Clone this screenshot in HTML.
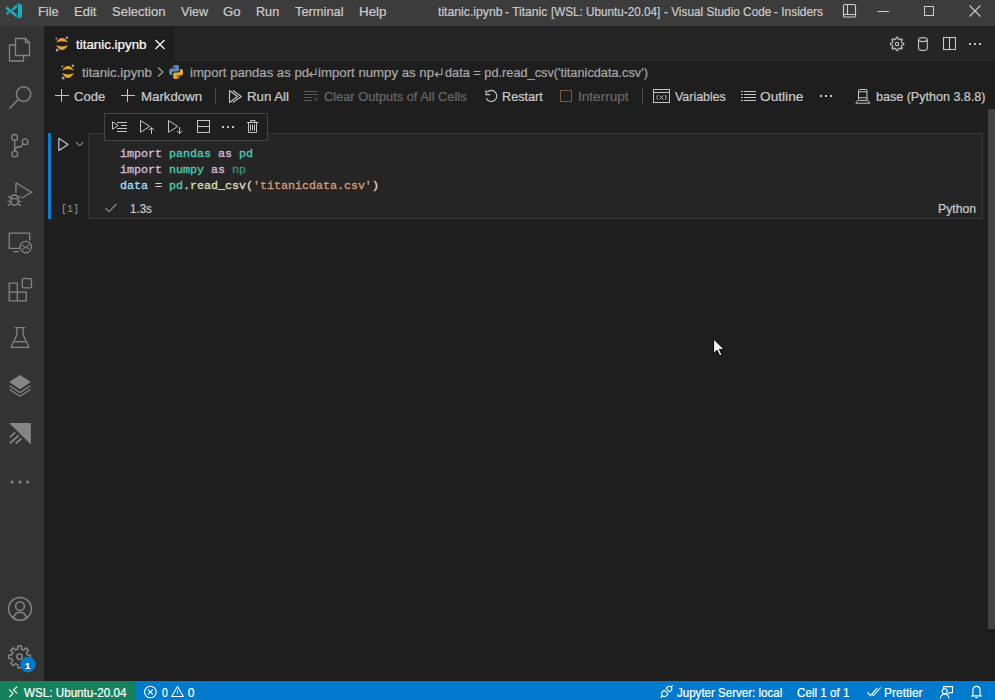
<!DOCTYPE html>
<html><head><meta charset="utf-8"><style>
html,body{margin:0;padding:0;width:995px;height:700px;overflow:hidden;background:#1e1e1e;position:relative}
.t{position:absolute;white-space:pre;line-height:20px;transform-origin:0 0;-webkit-text-stroke:0.2px currentColor}
.i{position:absolute;overflow:visible}
.code{position:absolute;font-family:"Liberation Mono",monospace;font-size:11.67px;line-height:16px;white-space:pre;color:#d4d4d4;-webkit-text-stroke:0.35px currentColor}
.kw{color:#d6b8d3} .mod{color:#4ec9b0} .var{color:#9cdcfe} .op{color:#d4d4d4} .fn{color:#dcdcaa} .br{color:#e2dac4} .str{color:#d49a72}
</style></head><body>
<div style="position:absolute;left:0;top:0;width:995px;height:26px;background:#3c3c3c"></div>
<div style="position:absolute;left:0;top:26px;width:44px;height:655px;background:#333333"></div>
<div style="position:absolute;left:44px;top:26px;width:951px;height:35px;background:#252526"></div>
<div style="position:absolute;left:44px;top:26px;width:130px;height:35px;background:#1e1e1e"></div>
<div style="position:absolute;left:0;top:681px;width:995px;height:19px;background:#007acc"></div>
<div style="position:absolute;left:0;top:681px;width:135px;height:19px;background:#16825d"></div>
<div style="position:absolute;left:48px;top:133px;width:3px;height:86px;background:#007fd4"></div>
<div style="position:absolute;left:88px;top:133px;width:893px;height:84px;background:#252526;border:1px solid #37373d"></div>
<div style="position:absolute;left:104px;top:113px;width:162px;height:26px;background:#1e1e1e;border:1px solid #454545"></div>
<div style="position:absolute;left:988px;top:109px;width:7px;height:520px;background:#434343"></div>
<svg style="position:absolute;left:0;top:0" width="995" height="700" viewBox="0 0 995 700"><g fill="#1eabba"><polygon points="17.9,3.1 22,4.9 22,17 18.1,18.8"/><polygon points="5.3,8.4 7,6.6 16.9,14.5 16.9,18"/><polygon points="16.9,3.7 16.9,7.6 13.2,10.9 11.3,9.5"/><polygon points="5.8,13.3 8.2,11.3 9.7,12.7 7.3,14.9"/></g>
<g fill="none" stroke="#cccccc" stroke-width="1.1"><rect x="843.5" y="4.5" width="12" height="12.5" rx="1"/><path d="M847.5,4.5 V14.5 M843.5,14.5 H855.5"/></g>
<path d="M877.5,11.5 H889" stroke="#cccccc" stroke-width="1"/>
<rect x="924.5" y="6.5" width="9" height="9" fill="none" stroke="#cccccc" stroke-width="1"/>
<path d="M969.5,5.5 L980.5,16.5 M980.5,5.5 L969.5,16.5" stroke="#cccccc" stroke-width="1.1"/>
<g fill="none" stroke="#858585" stroke-width="1.3"><path d="M15.5,38.5 H25.5 L29.5,42.5 V55.5 H15.5 Z"/><path d="M25.5,38.5 V42.5 H29.5"/><path d="M15.5,45 H9.5 V61 H23.5 V55.5"/></g>
<g fill="none" stroke="#858585" stroke-width="1.4"><circle cx="23.6" cy="94.1" r="7.2"/><path d="M18.5,99.3 L9.3,108.8"/></g>
<g fill="none" stroke="#858585" stroke-width="1.3"><circle cx="14.6" cy="137.4" r="2.9"/><circle cx="25.1" cy="141.8" r="2.9"/><circle cx="14.8" cy="154" r="2.9"/><path d="M14.7,140.3 V151.1"/><path d="M23.2,144 L20.5,147 H17 L14.8,149.5"/></g>
<g fill="none" stroke="#858585" stroke-width="1.3"><path d="M15.9,182.8 V193 M15.9,182.8 L31.4,192.2 L21.6,198.2"/><rect x="10.9" y="195" width="7" height="10.2" rx="3.4"/><path d="M10.9,198.7 H17.9"/><path d="M8,196.3 L10.9,198.3 M20.8,196.3 L17.9,198.3 M7.6,201.3 H10.9 M21.2,201.3 H17.9 M8,205.6 L10.9,203.5 M20.8,205.6 L17.9,203.5"/></g>
<g fill="none" stroke="#858585" stroke-width="1.3"><path d="M19.5,248.3 H9.2 V233.2 H29.7 V240.5"/><path d="M13.2,251.6 H19"/><circle cx="25.7" cy="247.1" r="5.7"/><path d="M22.6,245.2 L25,247.5 L22.6,249.6 M28.8,244.6 L26.4,246.9 L28.8,249.1" stroke-width="1.1"/></g>
<g fill="none" stroke="#858585" stroke-width="1.3"><path d="M9.2,283.2 H17.3 V292.2 H26.3 V300.8 H9.2 Z M9.2,292.2 H17.3 V300.8"/><rect x="22.3" y="278.6" width="9.2" height="9.2" rx="1"/></g>
<g fill="none" stroke="#858585" stroke-width="1.3" stroke-linejoin="round"><path d="M14.9,327.6 H25.1 M16.9,327.6 V334.8 L11.1,347.3 H28.9 L23.1,334.8 V327.6"/><path d="M13.8,341.7 H26.2"/></g>
<g fill="#858585"><path d="M20,375.1 L30.9,382 L20,389.2 L9.1,382 Z"/></g><g fill="none" stroke="#858585" stroke-width="1.3" stroke-linejoin="round"><path d="M9.6,385.8 L20,392.6 L30.4,385.8"/><path d="M9.6,389.5 L20,396.3 L30.4,389.5"/></g>
<g fill="#858585"><path d="M9.1,423.1 H30.9 V444.6 Z"/></g><g stroke="#858585" stroke-width="1.8"><path d="M9.8,437.3 L15.3,432.3 M9.8,443.2 L18.6,435.5 M15.8,443.5 L21.5,438.3"/></g>
<g fill="#858585"><circle cx="12.2" cy="482" r="1.6"/><circle cx="20" cy="482" r="1.6"/><circle cx="27.6" cy="482" r="1.6"/></g>
<g fill="none" stroke="#858585" stroke-width="1.5"><circle cx="20" cy="608.8" r="11.4"/><circle cx="20" cy="606.2" r="4.4"/><path d="M13.6,617.8 C14.4,614 16.8,612.3 20,612.3 C23.2,612.3 25.6,614 26.4,617.8"/></g>
<g fill="none" stroke="#858585" stroke-width="1.5" stroke-linejoin="round"><path d="M17.73,649.02 L17.79,645.95 L21.41,645.95 L21.47,649.02 L23.78,649.98 L26.00,647.85 L28.55,650.40 L26.42,652.62 L27.38,654.93 L30.45,654.99 L30.45,658.61 L27.38,658.67 L26.42,660.98 L28.55,663.20 L26.00,665.75 L23.78,663.62 L21.47,664.58 L21.41,667.65 L17.79,667.65 L17.73,664.58 L15.42,663.62 L13.20,665.75 L10.65,663.20 L12.78,660.98 L11.82,658.67 L8.75,658.61 L8.75,654.99 L11.82,654.93 L12.78,652.62 L10.65,650.40 L13.20,647.85 L15.42,649.98Z"/><circle cx="19.6" cy="656.8" r="2.7"/></g>
<circle cx="28" cy="664.6" r="7.8" fill="#007acc"/>
<g transform="translate(55,36)"><g fill="#eba32a"><path d="M1.1,6.4 Q7,-2.4 13,6.4 Q7,4.2 1.1,6.4Z"/><path d="M1.1,9.3 Q7,18.7 13,9.3 Q7,11.5 1.1,9.3Z"/></g><g fill="#a0a0a0"><circle cx="1.4" cy="2.6" r="1"/><circle cx="11.9" cy="1.7" r="1.3"/><circle cx="2.2" cy="14.1" r="1.5"/></g></g>
<path d="M155.5,40 L164.5,49 M164.5,40 L155.5,49" stroke="#ffffff" stroke-width="1.2"/>
<g fill="none" stroke="#c5c5c5" stroke-width="1.1" stroke-linejoin="round"><path d="M896.05,39.11 L896.18,37.26 L898.02,37.26 L898.15,39.11 L899.74,39.77 L901.14,38.56 L902.44,39.86 L901.23,41.26 L901.89,42.85 L903.74,42.98 L903.74,44.82 L901.89,44.95 L901.23,46.54 L902.44,47.94 L901.14,49.24 L899.74,48.03 L898.15,48.69 L898.02,50.54 L896.18,50.54 L896.05,48.69 L894.46,48.03 L893.06,49.24 L891.76,47.94 L892.97,46.54 L892.31,44.95 L890.46,44.82 L890.46,42.98 L892.31,42.85 L892.97,41.26 L891.76,39.86 L893.06,38.56 L894.46,39.77Z"/><circle cx="897.1" cy="43.9" r="1.7"/></g>
<g fill="none" stroke="#c5c5c5" stroke-width="1.1"><ellipse cx="922.9" cy="39.6" rx="4.4" ry="2"/><path d="M918.5,39.6 V48.2 C918.5,51.2 927.3,51.2 927.3,48.2 V39.6"/></g>
<g fill="none" stroke="#c5c5c5" stroke-width="1.1"><rect x="943.5" y="37.5" width="12" height="12"/><path d="M949.5,37.5 V49.5"/></g>
<g fill="#c5c5c5"><rect x="969" y="43" width="2" height="2"/><rect x="974" y="43" width="2" height="2"/><rect x="979" y="43" width="2" height="2"/></g>
<g transform="translate(61,64)"><g fill="#eba32a"><path d="M1.1,6.4 Q7,-2.4 13,6.4 Q7,4.2 1.1,6.4Z"/><path d="M1.1,9.3 Q7,18.7 13,9.3 Q7,11.5 1.1,9.3Z"/></g><g fill="#a0a0a0"><circle cx="1.4" cy="2.6" r="1"/><circle cx="11.9" cy="1.7" r="1.3"/><circle cx="2.2" cy="14.1" r="1.5"/></g></g>
<path d="M158,67.5 L163,72 L158,76.5" fill="none" stroke="#a9a9a9" stroke-width="1.1"/>
<g transform="translate(168.6,64.5)"><path fill="#5a8fbf" d="M7.3,0.5 C4,0.5 4.3,1.9 4.3,1.9 V3.5 H7.4 V4 H2.6 C2.6,4 0.5,3.8 0.5,7.3 C0.5,10.7 2.3,10.6 2.3,10.6 H3.5 V8.9 C3.5,8.9 3.4,7 5.4,7 H8.6 C8.6,7 10.4,7.1 10.4,5.2 V2.3 C10.4,2.3 10.7,0.5 7.3,0.5Z"/><path fill="#e9a838" d="M7.7,14.5 C11,14.5 10.7,13.1 10.7,13.1 V11.5 H7.6 V11 H12.4 C12.4,11 14.5,11.2 14.5,7.7 C14.5,4.3 12.7,4.4 12.7,4.4 H11.5 V6.1 C11.5,6.1 11.6,8 9.6,8 H6.4 C6.4,8 4.6,7.9 4.6,9.8 V12.7 C4.6,12.7 4.3,14.5 7.7,14.5Z"/><circle cx="5.8" cy="2" r="0.7" fill="#1e1e1e"/><circle cx="9.2" cy="13" r="0.7" fill="#1e1e1e"/></g>
<g transform="translate(308.3,68)" fill="none" stroke="#a9a9a9" stroke-width="1.1"><path d="M7.8,0.5 V6.5 H1.5"/><path d="M3.8,4 L1.2,6.5 L3.8,9"/></g>
<g transform="translate(434.1,68)" fill="none" stroke="#a9a9a9" stroke-width="1.1"><path d="M7.8,0.5 V6.5 H1.5"/><path d="M3.8,4 L1.2,6.5 L3.8,9"/></g>
<path d="M61.5,89 V102 M55,95.5 H69 M127.5,89 V102 M121,95.5 H135" stroke="#c5c5c5" stroke-width="1"/>
<path d="M215.5,88 V104 M642.5,88 V104" stroke="#4b4b4b" stroke-width="1"/>
<g fill="none" stroke="#c5c5c5" stroke-width="1.1" stroke-linejoin="round"><path d="M229.5,90.5 L237.5,96.5 L229.5,102.5 Z"/><path d="M232.8,90.5 L241.3,96.5 L232.8,102.5"/></g>
<g fill="none" stroke="#585858" stroke-width="1"><path d="M304,91.5 H318 M304,94.5 H318 M304,97.5 H312 M304,100.5 H312"/><path d="M314,97.5 L317.5,101 M317.5,97.5 L314,101"/></g>
<g fill="none" stroke="#c5c5c5" stroke-width="1.2"><path d="M487.1,92.4 A5.5,5.5 0 1 1 486.3,98.3"/><path d="M486,90.3 V94.6 H490.2"/></g>
<rect x="560.5" y="90.5" width="11" height="11" fill="none" stroke="#7d5443" stroke-width="1"/>
<g fill="none" stroke="#c5c5c5" stroke-width="1"><rect x="653.5" y="89.5" width="16" height="13"/><path d="M653.5,92.5 H669.5"/></g><g fill="none" stroke="#c5c5c5" stroke-width="0.9"><path d="M657.5,95 Q656.5,97.3 657.5,99.7 M665.5,95 Q666.5,97.3 665.5,99.7 M659.5,95.5 L663.5,99.5 M663.5,95.5 L659.5,99.5"/></g>
<g stroke="#c5c5c5" stroke-width="1"><path d="M741,91.5 H743 M741,94.5 H743 M741,97.5 H743 M741,100.5 H743 M744,91.5 H756 M744,94.5 H756 M744,97.5 H756 M744,100.5 H756"/></g>
<g fill="#c5c5c5"><rect x="820" y="95" width="2" height="2"/><rect x="825" y="95" width="2" height="2"/><rect x="830" y="95" width="2" height="2"/></g>
<g fill="none" stroke="#c5c5c5" stroke-width="1"><rect x="858.5" y="89.5" width="8.5" height="11" rx="1"/><path d="M858.5,91.8 H867 M858.5,97.8 H867"/><path d="M858.5,99.5 L855.8,103.2 H869.8 L867,99.5"/></g>
<g fill="none" stroke="#c5c5c5" stroke-width="1.2" stroke-linejoin="round"><path d="M58.8,138.3 L68,144.4 L58.8,150.5 Z"/></g>
<path d="M76,142.2 L79.6,145.8 L83.2,142.2" fill="none" stroke="#c5c5c5" stroke-width="1"/>
<g fill="none" stroke="#c5c5c5" stroke-width="1"><path d="M112.5,121.8 L118.2,125.5 L112.5,129.2 Z"/><path d="M117,122.5 H127 M121,125.5 H127 M117,128.5 H127 M117,131.5 H127"/></g>
<g fill="none" stroke="#c5c5c5" stroke-width="1" stroke-linejoin="round"><path d="M140.5,120.5 L149.8,126.4 L140.5,132.3 Z"/><path d="M151.5,127.8 V134 M148.9,130.2 L151.5,127.6 L154.2,130.2"/></g>
<g fill="none" stroke="#c5c5c5" stroke-width="1" stroke-linejoin="round"><path d="M168.5,120.5 L177.8,126.4 L168.5,132.3 Z"/><path d="M179.6,127 V133.4 M177,131 L179.6,133.6 L182.3,131"/></g>
<g fill="none" stroke="#c5c5c5" stroke-width="1"><rect x="197.5" y="120.5" width="12" height="12"/><path d="M197.5,126.5 H209.5"/></g>
<g fill="#c5c5c5"><rect x="222" y="126" width="2" height="2"/><rect x="227" y="126" width="2" height="2"/><rect x="232" y="126" width="2" height="2"/></g>
<g fill="none" stroke="#c5c5c5" stroke-width="1"><path d="M247,122.5 H258.5 M250.5,122.5 V120.5 H255 V122.5 M248.5,122.5 V132.5 H256.5 V122.5 M250.5,124.5 V130.5 M252.5,124.5 V130.5 M254.5,124.5 V130.5"/></g>
<path d="M105.5,208 L109,211.6 L116.5,204" fill="none" stroke="#8a8a8a" stroke-width="1.1"/>
<g fill="none" stroke="#ffffff" stroke-width="1.1"><path d="M9.2,689.5 L13,693.4 L9.2,697.2 M17.2,686.5 L13.5,689.9 L17.2,693.4"/></g>
<g fill="none" stroke="#ffffff" stroke-width="1.1"><circle cx="150.4" cy="692" r="5.8"/><path d="M148,689.6 L152.8,694.4 M152.8,689.6 L148,694.4"/></g>
<g fill="none" stroke="#ffffff" stroke-width="1.1" stroke-linejoin="round"><path d="M177.5,686.5 L183.3,696.5 H171.7 Z"/><path d="M177.5,690.5 V694"/></g>
<g fill="none" stroke="#ffffff" stroke-width="1.1" stroke-linejoin="round"><path d="M664.6,690.4 L667.9,693.7 Q667,696.6 664,696.6 Q661.5,696.2 661.6,693.6 Q662,691 664.6,690.4 Z"/><path d="M662.2,696 L660.6,697.6"/><path d="M666.2,688.4 L669.6,691.8 Q671.9,690.9 671.9,688.4 Q671.6,686.3 669.4,686.2 Q666.8,686.4 666.2,688.4 Z"/><path d="M671.2,686.9 L672.8,685.4"/></g>
<g fill="none" stroke="#ffffff" stroke-width="1.1"><path d="M936,0"/><path d="M943.6,689 V686.6 H952.5 V692.6 H949.6 L947.6,694.4"/><circle cx="944.7" cy="691.3" r="2.5"/><path d="M940.3,698.5 C940.6,695.5 942.5,694.3 944.7,694.3 C946.9,694.3 948.7,695.5 949,698.5"/></g>
<g fill="none" stroke="#ffffff" stroke-width="1.1"><path d="M867.5,692.5 L870.5,695.6 L877.2,688.2 M872,694.3 L873.5,695.6 L880.7,687.5"/></g>
<g fill="none" stroke="#ffffff" stroke-width="1.1"><path d="M972.9,694.6 V690.5 C972.9,687.8 974.5,686.4 976.5,686.4 C978.5,686.4 980.1,687.8 980.1,690.5 V694.6 L981.2,695.9 H971.8 Z M975.4,697.6 H977.6"/></g>
<path d="M713.6,339 V353.8 L717,350.2 L719.7,355.8 L722,354.8 L719.4,349.4 H724.2 Z" fill="#f2f4f4" stroke="#000" stroke-width="1" stroke-linejoin="miter"/></svg>
<div class="t" style="left:25px;top:655.5px;font-family:'Liberation Sans';font-size:9.5px;line-height:20px;color:#fff;font-weight:bold">1</div>
<div class="code" style="left:120px;top:146px"><div><span class="kw">import</span> <span class="mod">pandas</span> <span class="kw">as</span> <span class="mod">pd</span></div><div><span class="kw">import</span> <span class="mod">numpy</span> <span class="kw">as</span> <span class="mod" style="color:#3b8f80">np</span></div><div><span class="var">data</span> <span class="op">=</span> <span class="mod">pd</span><span class="op">.</span><span class="fn">read_csv</span><span class="br">(</span><span class="str">'titanicdata.csv'</span><span class="br">)</span></div></div>
<div class="t" style="left:38.39px;top:2px;font-family:'Liberation Sans';font-size:12.8px;transform:scaleX(1.0053);color:#cccccc;">File</div>
<div class="t" style="left:73.79px;top:2px;font-family:'Liberation Sans';font-size:12.8px;transform:scaleX(1.0143);color:#cccccc;">Edit</div>
<div class="t" style="left:111.58px;top:2px;font-family:'Liberation Sans';font-size:12.8px;transform:scaleX(1.0157);color:#cccccc;">Selection</div>
<div class="t" style="left:180.50px;top:2px;font-family:'Liberation Sans';font-size:12.8px;transform:scaleX(0.9821);color:#cccccc;">View</div>
<div class="t" style="left:222.67px;top:2px;font-family:'Liberation Sans';font-size:12.8px;transform:scaleX(1.0312);color:#cccccc;">Go</div>
<div class="t" style="left:255.71px;top:2px;font-family:'Liberation Sans';font-size:12.8px;transform:scaleX(0.9864);color:#cccccc;">Run</div>
<div class="t" style="left:294.90px;top:2px;font-family:'Liberation Sans';font-size:12.8px;transform:scaleX(1.0042);color:#cccccc;">Terminal</div>
<div class="t" style="left:358.76px;top:2px;font-family:'Liberation Sans';font-size:12.8px;transform:scaleX(1.0440);color:#cccccc;">Help</div>
<div class="t" style="left:437.60px;top:2px;font-family:'Liberation Sans';font-size:12.8px;transform:scaleX(0.9552);color:#cccccc;">titanic.ipynb</div>
<div class="t" style="left:505.26px;top:2px;font-family:'Liberation Sans';font-size:12.8px;transform:scaleX(0.9409);color:#cccccc;">- Titanic</div>
<div class="t" style="left:551.29px;top:2px;font-family:'Liberation Sans';font-size:12.8px;transform:scaleX(0.9136);color:#cccccc;">[WSL: Ubuntu-20.04]</div>
<div class="t" style="left:663.58px;top:2px;font-family:'Liberation Sans';font-size:12.8px;transform:scaleX(0.9217);color:#cccccc;">- Visual Studio Code</div>
<div class="t" style="left:774.37px;top:2px;font-family:'Liberation Sans';font-size:12.8px;transform:scaleX(0.9314);color:#cccccc;">- Insiders</div>
<div class="t" style="left:76.00px;top:35px;font-family:'Liberation Sans';font-size:12.8px;transform:scaleX(1.0433);color:#ffffff;">titanic.ipynb</div>
<div class="t" style="left:82.10px;top:63px;font-family:'Liberation Sans';font-size:12.8px;transform:scaleX(1.0358);color:#a9a9a9;">titanic.ipynb</div>
<div class="t" style="left:189.67px;top:63px;font-family:'Liberation Sans';font-size:12.8px;transform:scaleX(1.0263);color:#a9a9a9;">import pandas as pd</div>
<div class="t" style="left:317.67px;top:63px;font-family:'Liberation Sans';font-size:12.8px;transform:scaleX(1.0324);color:#a9a9a9;">import numpy as np</div>
<div class="t" style="left:444.50px;top:63px;font-family:'Liberation Sans';font-size:12.8px;transform:scaleX(0.9961);color:#a9a9a9;">data = pd.read_csv('titanicdata.csv')</div>
<div class="t" style="left:74.38px;top:87px;font-family:'Liberation Sans';font-size:12.8px;transform:scaleX(1.0207);color:#cccccc;">Code</div>
<div class="t" style="left:140.86px;top:87px;font-family:'Liberation Sans';font-size:12.8px;transform:scaleX(1.0362);color:#cccccc;">Markdown</div>
<div class="t" style="left:246.67px;top:87px;font-family:'Liberation Sans';font-size:12.8px;transform:scaleX(1.0333);color:#cccccc;">Run All</div>
<div class="t" style="left:324.00px;top:87px;font-family:'Liberation Sans';font-size:12.8px;transform:scaleX(1.0021);color:#6a6a6a;">Clear Outputs of All Cells</div>
<div class="t" style="left:502.01px;top:87px;font-family:'Liberation Sans';font-size:12.8px;transform:scaleX(0.9875);color:#cccccc;">Restart</div>
<div class="t" style="left:577.64px;top:87px;font-family:'Liberation Sans';font-size:12.8px;transform:scaleX(1.0617);color:#6a6a6a;">Interrupt</div>
<div class="t" style="left:674.60px;top:87px;font-family:'Liberation Sans';font-size:12.8px;transform:scaleX(0.9692);color:#cccccc;">Variables</div>
<div class="t" style="left:760.23px;top:87px;font-family:'Liberation Sans';font-size:12.8px;transform:scaleX(1.0692);color:#cccccc;">Outline</div>
<div class="t" style="left:875.52px;top:87px;font-family:'Liberation Sans';font-size:12.8px;transform:scaleX(0.9800);color:#cccccc;">base (Python 3.8.8)</div>
<div class="t" style="left:60.89px;top:199px;font-family:'Liberation Mono';font-size:11px;transform:scaleX(0.9062);color:#8f8f8f;">[1]</div>
<div class="t" style="left:129.64px;top:199px;font-family:'Liberation Sans';font-size:12px;transform:scaleX(0.9619);color:#cccccc;">1.3s</div>
<div class="t" style="left:938.28px;top:199px;font-family:'Liberation Sans';font-size:12px;transform:scaleX(1.0194);color:#cccccc;">Python</div>
<div class="t" style="left:23.60px;top:683px;font-family:'Liberation Sans';font-size:12px;transform:scaleX(0.9714);color:#ffffff;">WSL: Ubuntu-20.04</div>
<div class="t" style="left:161.50px;top:683px;font-family:'Liberation Sans';font-size:12px;transform:scaleX(0.8667);color:#ffffff;">0</div>
<div class="t" style="left:187.80px;top:683px;font-family:'Liberation Sans';font-size:12px;transform:scaleX(1.0000);color:#ffffff;">0</div>
<div class="t" style="left:677.00px;top:683px;font-family:'Liberation Sans';font-size:12px;transform:scaleX(0.9624);color:#ffffff;">Jupyter Server: local</div>
<div class="t" style="left:797.43px;top:683px;font-family:'Liberation Sans';font-size:12px;transform:scaleX(0.9736);color:#ffffff;">Cell 1 of 1</div>
<div class="t" style="left:884.00px;top:683px;font-family:'Liberation Sans';font-size:12px;transform:scaleX(0.9974);color:#ffffff;">Prettier</div>
</body></html>
